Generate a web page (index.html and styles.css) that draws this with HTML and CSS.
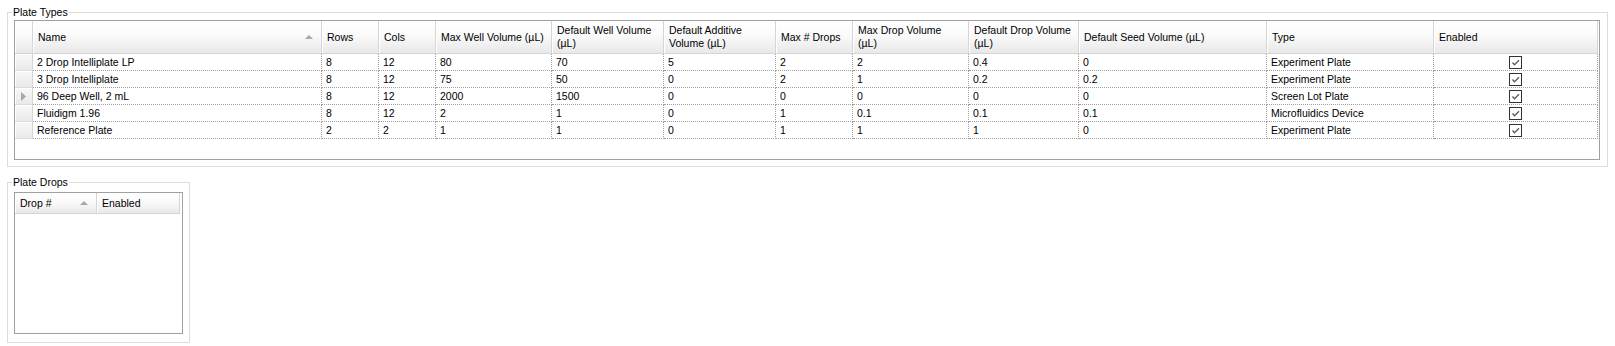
FILE: index.html
```html
<!DOCTYPE html>
<html>
<head>
<meta charset="utf-8">
<title>Plate Types</title>
<link rel="stylesheet" href="styles.css">
</head>
<body>
<fieldset class="group group-types">
  <legend>Plate Types</legend>
  <div class="dgv dgv-types">
    <div class="hrow">
      <div class="hcell corner"></div>
      <div class="hcell sorted"><span>Name</span><span class="sort"></span></div>
      <div class="hcell">Rows</div>
      <div class="hcell">Cols</div>
      <div class="hcell">Max Well Volume (µL)</div>
      <div class="hcell">Default Well Volume<br>(µL)</div>
      <div class="hcell">Default Additive<br>Volume (µL)</div>
      <div class="hcell">Max # Drops</div>
      <div class="hcell">Max Drop Volume<br>(µL)</div>
      <div class="hcell">Default Drop Volume<br>(µL)</div>
      <div class="hcell">Default Seed Volume (µL)</div>
      <div class="hcell">Type</div>
      <div class="hcell">Enabled</div>
    </div>
    <div class="drow">
      <div class="rhead"></div>
      <div class="cell">2 Drop Intelliplate LP</div>
      <div class="cell">8</div>
      <div class="cell">12</div>
      <div class="cell">80</div>
      <div class="cell">70</div>
      <div class="cell">5</div>
      <div class="cell">2</div>
      <div class="cell">2</div>
      <div class="cell">0.4</div>
      <div class="cell">0</div>
      <div class="cell">Experiment Plate</div>
      <div class="cell check"><span class="cb"><svg viewBox="0 0 11 11" width="11" height="11"><polyline points="2.5,5.5 4.5,7.8 9,3.2"/></svg></span></div>
    </div>
    <div class="drow">
      <div class="rhead"></div>
      <div class="cell">3 Drop Intelliplate</div>
      <div class="cell">8</div>
      <div class="cell">12</div>
      <div class="cell">75</div>
      <div class="cell">50</div>
      <div class="cell">0</div>
      <div class="cell">2</div>
      <div class="cell">1</div>
      <div class="cell">0.2</div>
      <div class="cell">0.2</div>
      <div class="cell">Experiment Plate</div>
      <div class="cell check"><span class="cb"><svg viewBox="0 0 11 11" width="11" height="11"><polyline points="2.5,5.5 4.5,7.8 9,3.2"/></svg></span></div>
    </div>
    <div class="drow">
      <div class="rhead current"><svg viewBox="0 0 5 9" width="5" height="9"><polygon points="0,0 5,4.5 0,9"/></svg></div>
      <div class="cell">96 Deep Well, 2 mL</div>
      <div class="cell">8</div>
      <div class="cell">12</div>
      <div class="cell">2000</div>
      <div class="cell">1500</div>
      <div class="cell">0</div>
      <div class="cell">0</div>
      <div class="cell">0</div>
      <div class="cell">0</div>
      <div class="cell">0</div>
      <div class="cell">Screen Lot Plate</div>
      <div class="cell check"><span class="cb"><svg viewBox="0 0 11 11" width="11" height="11"><polyline points="2.5,5.5 4.5,7.8 9,3.2"/></svg></span></div>
    </div>
    <div class="drow">
      <div class="rhead"></div>
      <div class="cell">Fluidigm 1.96</div>
      <div class="cell">8</div>
      <div class="cell">12</div>
      <div class="cell">2</div>
      <div class="cell">1</div>
      <div class="cell">0</div>
      <div class="cell">1</div>
      <div class="cell">0.1</div>
      <div class="cell">0.1</div>
      <div class="cell">0.1</div>
      <div class="cell">Microfluidics Device</div>
      <div class="cell check"><span class="cb"><svg viewBox="0 0 11 11" width="11" height="11"><polyline points="2.5,5.5 4.5,7.8 9,3.2"/></svg></span></div>
    </div>
    <div class="drow">
      <div class="rhead"></div>
      <div class="cell">Reference Plate</div>
      <div class="cell">2</div>
      <div class="cell">2</div>
      <div class="cell">1</div>
      <div class="cell">1</div>
      <div class="cell">0</div>
      <div class="cell">1</div>
      <div class="cell">1</div>
      <div class="cell">1</div>
      <div class="cell">0</div>
      <div class="cell">Experiment Plate</div>
      <div class="cell check"><span class="cb"><svg viewBox="0 0 11 11" width="11" height="11"><polyline points="2.5,5.5 4.5,7.8 9,3.2"/></svg></span></div>
    </div>
  </div>
</fieldset>

<fieldset class="group group-drops">
  <legend>Plate Drops</legend>
  <div class="dgv dgv-drops">
    <div class="hrow">
      <div class="hcell sorted"><span>Drop #</span><span class="sort"></span></div>
      <div class="hcell">Enabled</div>
    </div>
  </div>
</fieldset>
</body>
</html>
```

FILE: styles.css
```css
html, body {
  margin: 0;
  background: #ffffff;
}

body {
  padding: 6px 7px 0 7px;
  font-family: "Liberation Sans", Arial, sans-serif;
  font-size: 10.5px;
  color: #000000;
}

.group {
  margin: 0;
  box-sizing: border-box;
  border: 1px solid #dcdcdc;
  min-width: 0;
}

.group legend {
  padding: 0 1px;
  margin-left: -2px;
  line-height: 12px;
  color: #000000;
}

.group-types {
  width: 1601px;
  padding: 2px 7px 6px 6px;
}

.group-drops {
  width: 183px;
  margin-top: 9px;
  padding: 4px 6px 8px 6px;
}

.dgv {
  box-sizing: border-box;
  border: 1px solid #a0a0a0;
  background: #ffffff;
  overflow: hidden;
}

.dgv-types {
  height: 140px;
  --cols: 18px 289px 57px 57px 116px 112px 112px 77px 116px 110px 188px 167px 164px;
}

.dgv-drops {
  height: 142px;
  --cols: 82px 83px;
}

.hrow,
.drow {
  display: grid;
  grid-template-columns: var(--cols);
}

.dgv-types .hrow {
  height: 33px;
}

.dgv-drops .hrow {
  height: 21px;
}

.hcell {
  box-sizing: border-box;
  display: flex;
  align-items: center;
  padding: 0 4px 0 5px;
  line-height: 13px;
  white-space: nowrap;
  overflow: hidden;
  background: linear-gradient(to bottom, #ffffff 0%, #fafafa 45%, #f0f0f0 75%, #e8e8e8 100%);
  border-right: 1px solid #d5d5d5;
  border-bottom: 1px solid #d5d5d5;
  box-shadow: inset 1px 0 0 #ffffff;
}

.hcell.corner {
  padding: 0;
}

.hcell.sorted {
  justify-content: space-between;
  padding-right: 8px;
}

.sort {
  width: 0;
  height: 0;
  border-left: 4px solid transparent;
  border-right: 4px solid transparent;
  border-bottom: 4px solid #a8a8a8;
  margin-top: -1px;
}

.drow {
  height: 17px;
}

.rhead {
  box-sizing: border-box;
  display: flex;
  align-items: center;
  padding-left: 6px;
  background: linear-gradient(to bottom, #f8f8f8 0%, #efefef 60%, #e9e9e9 100%);
  border-right: 1px solid #d5d5d5;
  border-bottom: 1px solid #dcdcdc;
  box-shadow: inset 1px 1px 0 #ffffff;
}

.rhead svg polygon {
  fill: #a8a8a8;
}

.cell {
  box-sizing: border-box;
  padding-left: 4px;
  line-height: 16px;
  white-space: nowrap;
  overflow: hidden;
  border-right: 1px dotted #a0a0a0;
  border-bottom: 1px dotted #a0a0a0;
}

.cell.check {
  display: flex;
  align-items: center;
  justify-content: center;
  padding-left: 0;
}

.cb {
  box-sizing: border-box;
  width: 13px;
  height: 13px;
  border: 1px solid #333333;
  background: #ffffff;
  display: flex;
}

.cb svg polyline {
  fill: none;
  stroke: #5a5a5a;
  stroke-width: 1.3;
}
```
